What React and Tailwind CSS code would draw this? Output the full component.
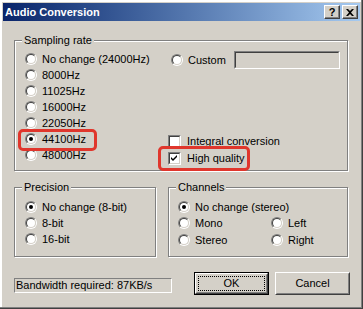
import React from 'react';

function Radio({ checked }) {
  return (
    <div className="w-[12px] h-[12px] shrink-0 rounded-full border border-t-[#808080] border-l-[#808080] border-b-white border-r-white">
      <div className="w-full h-full rounded-full border border-t-[#404040] border-l-[#404040] border-b-[#d4d0c8] border-r-[#d4d0c8] bg-white flex items-center justify-center">
        {checked && <div className="w-[4px] h-[4px] rounded-full bg-black" />}
      </div>
    </div>
  );
}

function RadioRow({ label, checked, className = '' }) {
  return (
    <div className={`flex items-center h-[16px] ${className}`}>
      <Radio checked={checked} />
      <span className="ml-[5px] leading-none">{label}</span>
    </div>
  );
}

function Checkbox({ checked }) {
  return (
    <div className="w-[13px] h-[13px] shrink-0 border border-t-[#808080] border-l-[#808080] border-b-white border-r-white">
      <div className="w-full h-full border border-t-[#404040] border-l-[#404040] border-b-[#d4d0c8] border-r-[#d4d0c8] bg-white flex items-center justify-center">
        {checked && (
          <svg width="7" height="7" viewBox="0 0 7 7">
            <path d="M0 2 L2 4 L6 0 L6 2 L2 6 L0 4 Z" fill="#000" />
          </svg>
        )}
      </div>
    </div>
  );
}

function Group({ label, className = '', children }) {
  return (
    <div className={`relative border border-[#808080] shadow-[inset_1px_1px_0_#fff,1px_1px_0_#fff] ${className}`}>
      <span className="absolute top-[-8px] left-[7px] px-[2px] bg-[#d4d0c8] leading-[14px]">{label}</span>
      {children}
    </div>
  );
}

function Button({ children, isDefault }) {
  if (isDefault) {
    return (
      <div className="w-[75px] h-[23px] border border-black">
        <div className="w-full h-full border border-t-white border-l-white border-b-[#404040] border-r-[#404040]">
          <div className="w-full h-full border border-t-[#d4d0c8] border-l-[#d4d0c8] border-b-[#808080] border-r-[#808080] p-[1px]">
            <div className="w-full h-full border border-dotted border-black flex items-center justify-center leading-none">{children}</div>
          </div>
        </div>
      </div>
    );
  }
  return (
    <div className="w-[75px] h-[23px] border border-t-white border-l-white border-b-[#404040] border-r-[#404040]">
      <div className="w-full h-full border border-t-[#d4d0c8] border-l-[#d4d0c8] border-b-[#808080] border-r-[#808080] flex items-center justify-center leading-none">
        {children}
      </div>
    </div>
  );
}

function TitleButton({ children }) {
  return (
    <div className="w-[16px] h-[14px] bg-[#d4d0c8] border border-t-white border-l-white border-b-[#404040] border-r-[#404040] shadow-[inset_-1px_-1px_0_#808080] flex items-center justify-center">
      {children}
    </div>
  );
}

export default function App() {
  return (
    <div className="w-[363px] h-[309px] bg-[#d4d0c8] p-[3px] overflow-hidden text-[11px] text-black font-['Liberation_Sans',Arial,sans-serif] shadow-[inset_-1px_-1px_0_#404040,inset_-2px_-2px_0_#808080,inset_2px_2px_0_#fff]">
      {/* title bar */}
      <div className="h-[18px] flex items-center justify-between pl-[2px] pr-[2px] bg-gradient-to-r from-[#0a246a] to-[#a6caf0]">
        <span className="text-white font-bold leading-none">Audio Conversion</span>
        <div className="flex gap-[2px]">
          <TitleButton>
            <span className="font-bold text-[11px] leading-none">?</span>
          </TitleButton>
          <TitleButton>
            <svg width="8" height="7" viewBox="0 0 8 7">
              <path d="M0 0h2l2 2 2-2h2L5 3.5 8 7H6L4 5 2 7H0l3-3.5Z" fill="#000" />
            </svg>
          </TitleButton>
        </div>
      </div>

      {/* sampling rate */}
      <Group label="Sampling rate" className="mt-[19px] ml-[11px] w-[334px] h-[131px]">
        <div className="flex pl-[10px] pt-[10px]">
          <div className="w-[143px] flex flex-col">
            <RadioRow label="No change (24000Hz)" />
            <RadioRow label="8000Hz" />
            <RadioRow label="11025Hz" />
            <RadioRow label="16000Hz" />
            <RadioRow label="22050Hz" />
            <RadioRow label="44100Hz" checked />
            <RadioRow label="48000Hz" />
          </div>
          <div className="flex flex-col">
            <div className="flex items-center h-[18px] pl-[3px]">
              <Radio />
              <span className="ml-[5px] w-[46px] leading-none">Custom</span>
              <div className="w-[106px] h-[18px] border border-t-[#808080] border-l-[#808080] border-b-white border-r-white">
                <div className="w-full h-full border border-t-[#404040] border-l-[#404040] border-b-[#d4d0c8] border-r-[#d4d0c8] bg-[#d4d0c8]" />
              </div>
            </div>
            <div className="flex items-center h-[16px] mt-[64px]">
              <Checkbox />
              <span className="ml-[6px] leading-none">Integral conversion</span>
            </div>
            <div className="flex items-center h-[16px] mt-[1px]">
              <Checkbox checked />
              <span className="ml-[6px] leading-none">High quality</span>
            </div>
          </div>
        </div>
        <div className="absolute left-[3px] top-[88px] w-[79px] h-[22px] border-[3px] border-[#e0362c] rounded-[5px]" />
        <div className="absolute left-[143px] top-[105px] w-[92px] h-[25px] border-[3px] border-[#e0362c] rounded-[5px]" />
      </Group>

      {/* precision + channels */}
      <div className="flex gap-[12px] mt-[16px] ml-[11px]">
        <Group label="Precision" className="w-[142px] h-[70px]">
          <div className="flex flex-col pl-[10px] pt-[11px]">
            <RadioRow label="No change (8-bit)" checked />
            <RadioRow label="8-bit" />
            <RadioRow label="16-bit" />
          </div>
        </Group>
        <Group label="Channels" className="w-[180px] h-[70px]">
          <div className="flex flex-col pl-[9px] pt-[11px]">
            <RadioRow label="No change (stereo)" checked />
            <div className="flex">
              <RadioRow label="Mono" className="w-[93px]" />
              <RadioRow label="Left" />
            </div>
            <div className="flex mt-[1px]">
              <RadioRow label="Stereo" className="w-[93px]" />
              <RadioRow label="Right" />
            </div>
          </div>
        </Group>
      </div>

      {/* bottom row */}
      <div className="flex items-start mt-[15px] ml-[11px]">
        <div className="mt-[6px] w-[158px] h-[15px] border border-t-[#808080] border-l-[#808080] border-b-white border-r-white flex items-center pl-[1px] leading-none">
          Bandwidth required: 87KB/s
        </div>
        <div className="ml-[22px]">
          <Button isDefault>OK</Button>
        </div>
        <div className="ml-[6px]">
          <Button>Cancel</Button>
        </div>
      </div>
    </div>
  );
}
